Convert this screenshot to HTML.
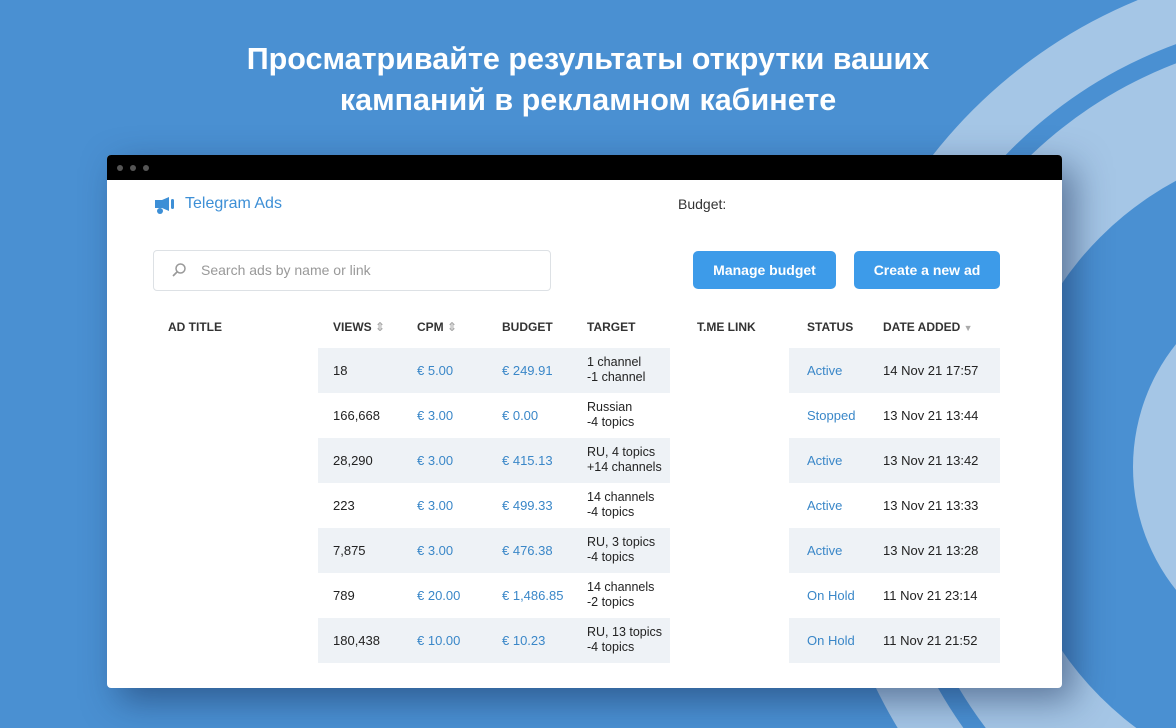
<!DOCTYPE html>
<html><head><meta charset="utf-8"><style>
*{margin:0;padding:0;box-sizing:border-box}
body{width:1176px;height:728px;overflow:hidden;background:#4a90d2;font-family:"Liberation Sans","DejaVu Sans",sans-serif;position:relative}
.t{position:absolute;white-space:nowrap}
h1{position:absolute;left:0;width:1176px;top:39px;text-align:center;color:#fff;font-size:30.5px;line-height:41px;font-weight:bold}
.win{position:absolute;left:107px;top:155px;width:955px;height:533px;background:#fff;border-radius:4px;overflow:hidden;box-shadow:12px 12px 35px rgba(20,40,80,.5)}
.bar{height:25px;background:#000;position:relative}
.dot{position:absolute;top:10px;width:6px;height:6px;border-radius:50%;background:#555}
.w{position:absolute}
.shade{position:absolute;background:#eef2f6;height:45px}
.hd{position:absolute;top:165px;font-size:12px;font-weight:bold;color:#333}
.c{position:absolute;font-size:13px;color:#222}
.b{color:#3a87c8}
.btn{position:absolute;top:96px;height:38px;background:#3d9be9;border-radius:5px;color:#fff;font-size:14px;font-weight:bold;text-align:center;line-height:38px}
</style></head><body>
<svg width="1176" height="728" style="position:absolute;left:0;top:0">
<circle cx="1330" cy="467" r="505" fill="#a5c6e6"/>
<circle cx="1330" cy="467" r="450" fill="#4a90d2"/>
<circle cx="1330" cy="467" r="432" fill="#a5c6e6"/>
<circle cx="1330" cy="467" r="325" fill="#4a90d2"/>
<circle cx="1330" cy="467" r="197" fill="#a5c6e6"/>
</svg>
<h1>Просматривайте результаты открутки ваших<br>кампаний в рекламном кабинете</h1>
<div class="win">
<div class="bar"><div class="dot" style="left:10px"></div><div class="dot" style="left:23px"></div><div class="dot" style="left:36px"></div></div>
<svg class="w" style="left:47px;top:42px" width="22" height="18" viewBox="0 0 22 18"><path d="M1 3h7l7-3v14l-7-3H1z" fill="#3d8fd6"/><circle cx="6" cy="14" r="3" fill="#3d8fd6"/><rect x="17" y="2" width="3" height="10" rx="1.5" fill="#3d8fd6"/></svg>
<div class="t" style="left:78px;top:40px;font-size:16px;color:#3d8fd6">Telegram Ads</div>
<div class="t" style="left:571px;top:41px;font-size:14px;color:#333">Budget:</div>
<div class="w" style="left:46px;top:95px;width:398px;height:41px;border:1px solid #dde1e5;border-radius:4px"></div>
<svg class="w" style="left:64px;top:107px" width="16" height="16" viewBox="0 0 16 16"><circle cx="9.5" cy="6.5" r="4.5" fill="none" stroke="#999" stroke-width="1.5"/><path d="M6 10L2 14" stroke="#999" stroke-width="1.7"/></svg>
<div class="t" style="left:94px;top:107px;font-size:14px;color:#999">Search ads by name or link</div>
<div class="btn" style="left:586px;width:143px">Manage budget</div>
<div class="btn" style="left:747px;width:146px">Create a new ad</div>
<div class="hd" style="left:61px">AD TITLE</div>
<div class="hd" style="left:226px">VIEWS <span style="color:#aaa">⇕</span></div>
<div class="hd" style="left:310px">CPM <span style="color:#aaa">⇕</span></div>
<div class="hd" style="left:395px">BUDGET</div>
<div class="hd" style="left:480px">TARGET</div>
<div class="hd" style="left:590px">T.ME LINK</div>
<div class="hd" style="left:700px">STATUS</div>
<div class="hd" style="left:776px">DATE ADDED <span style="color:#aaa;font-size:9px">▼</span></div>
<div class="shade" style="left:211px;top:193px;width:352px"></div><div class="shade" style="left:682px;top:193px;width:211px"></div>
<div class="shade" style="left:211px;top:283px;width:352px"></div><div class="shade" style="left:682px;top:283px;width:211px"></div>
<div class="shade" style="left:211px;top:373px;width:352px"></div><div class="shade" style="left:682px;top:373px;width:211px"></div>
<div class="shade" style="left:211px;top:463px;width:352px"></div><div class="shade" style="left:682px;top:463px;width:211px"></div>

<div class="c" style="left:226px;top:208px">18</div><div class="c b" style="left:310px;top:208px">€ 5.00</div><div class="c b" style="left:395px;top:208px">€ 249.91</div><div class="c" style="left:480px;top:200px;font-size:12.5px;line-height:15px">1 channel<br>-1 channel</div><div class="c b" style="left:700px;top:208px">Active</div><div class="c" style="left:776px;top:208px">14 Nov 21 17:57</div>

<div class="c" style="left:226px;top:253px">166,668</div><div class="c b" style="left:310px;top:253px">€ 3.00</div><div class="c b" style="left:395px;top:253px">€ 0.00</div><div class="c" style="left:480px;top:245px;font-size:12.5px;line-height:15px">Russian<br>-4 topics</div><div class="c b" style="left:700px;top:253px">Stopped</div><div class="c" style="left:776px;top:253px">13 Nov 21 13:44</div>

<div class="c" style="left:226px;top:298px">28,290</div><div class="c b" style="left:310px;top:298px">€ 3.00</div><div class="c b" style="left:395px;top:298px">€ 415.13</div><div class="c" style="left:480px;top:290px;font-size:12.5px;line-height:15px">RU, 4 topics<br>+14 channels</div><div class="c b" style="left:700px;top:298px">Active</div><div class="c" style="left:776px;top:298px">13 Nov 21 13:42</div>

<div class="c" style="left:226px;top:343px">223</div><div class="c b" style="left:310px;top:343px">€ 3.00</div><div class="c b" style="left:395px;top:343px">€ 499.33</div><div class="c" style="left:480px;top:335px;font-size:12.5px;line-height:15px">14 channels<br>-4 topics</div><div class="c b" style="left:700px;top:343px">Active</div><div class="c" style="left:776px;top:343px">13 Nov 21 13:33</div>

<div class="c" style="left:226px;top:388px">7,875</div><div class="c b" style="left:310px;top:388px">€ 3.00</div><div class="c b" style="left:395px;top:388px">€ 476.38</div><div class="c" style="left:480px;top:380px;font-size:12.5px;line-height:15px">RU, 3 topics<br>-4 topics</div><div class="c b" style="left:700px;top:388px">Active</div><div class="c" style="left:776px;top:388px">13 Nov 21 13:28</div>

<div class="c" style="left:226px;top:433px">789</div><div class="c b" style="left:310px;top:433px">€ 20.00</div><div class="c b" style="left:395px;top:433px">€ 1,486.85</div><div class="c" style="left:480px;top:425px;font-size:12.5px;line-height:15px">14 channels<br>-2 topics</div><div class="c b" style="left:700px;top:433px">On Hold</div><div class="c" style="left:776px;top:433px">11 Nov 21 23:14</div>

<div class="c" style="left:226px;top:478px">180,438</div><div class="c b" style="left:310px;top:478px">€ 10.00</div><div class="c b" style="left:395px;top:478px">€ 10.23</div><div class="c" style="left:480px;top:470px;font-size:12.5px;line-height:15px">RU, 13 topics<br>-4 topics</div><div class="c b" style="left:700px;top:478px">On Hold</div><div class="c" style="left:776px;top:478px">11 Nov 21 21:52</div>
</div>
</body></html>
